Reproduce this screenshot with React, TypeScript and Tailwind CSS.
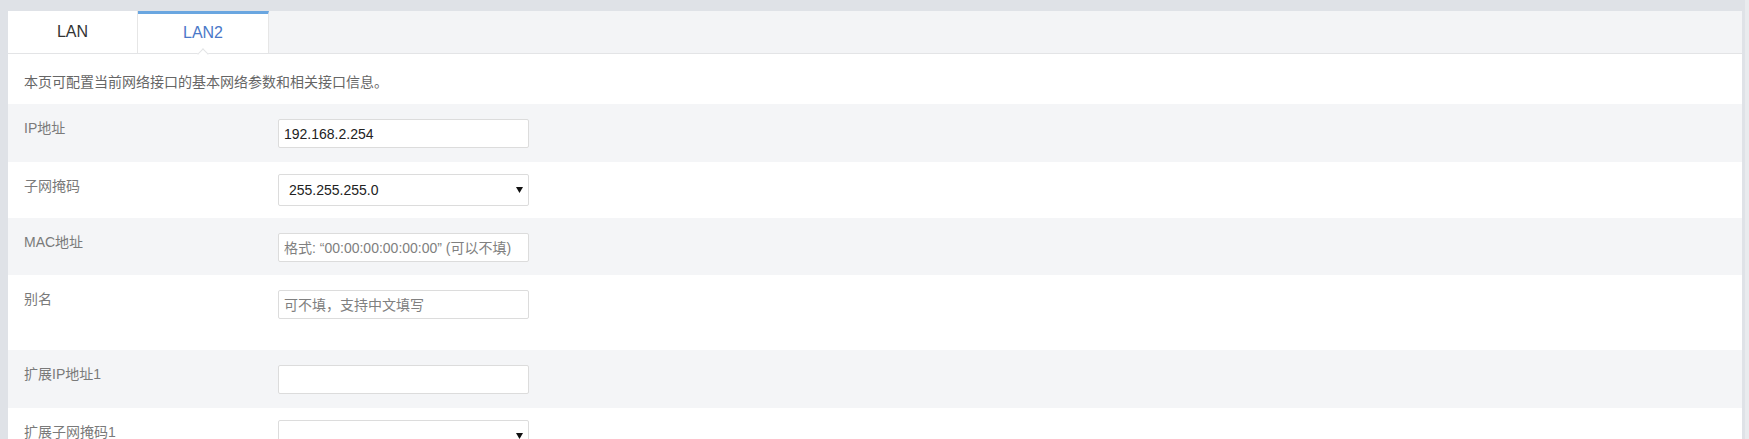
import React from 'react';

const font = "font-['Liberation_Sans','Noto_Sans_CJK_SC',sans-serif]";

type Row = {
  label: string;
  kind: 'input' | 'select';
  value?: string;
  placeholder?: string;
  height: string;
  gray: boolean;
};

const rows: Row[] = [
  { label: 'IP地址', kind: 'input', value: '192.168.2.254', height: 'h-[58px]', gray: true },
  { label: '子网掩码', kind: 'select', value: '255.255.255.0', height: 'h-[56px]', gray: false },
  { label: 'MAC地址', kind: 'input', placeholder: '格式: “00:00:00:00:00:00” (可以不填)', height: 'h-[57px]', gray: true },
  { label: '别名', kind: 'input', placeholder: '可不填，支持中文填写', height: 'h-[75px]', gray: false },
  { label: '扩展IP地址1', kind: 'input', value: '', height: 'h-[58px]', gray: true },
  { label: '扩展子网掩码1', kind: 'select', value: '', height: 'h-[58px]', gray: false },
];

function Caret() {
  return (
    <svg width="7" height="6" viewBox="0 0 7 6" className="absolute right-[5px] top-1/2 -translate-y-1/2">
      <polygon points="0,0 7,0 3.5,6" fill="#111" />
    </svg>
  );
}

function Field({ row }: { row: Row }) {
  if (row.kind === 'select') {
    return (
      <div className="pt-[12px]">
        <div className="relative w-[251px] h-[32px] bg-white border border-[#dcdcdc] rounded-[2px] flex items-center pl-[10px] text-[14px] text-[#222]">
          <span>{row.value}</span>
          <Caret />
        </div>
      </div>
    );
  }
  return (
    <div className="pt-[15px]">
      <input
        readOnly
        value={row.value ?? ''}
        placeholder={row.placeholder}
        className="w-[251px] h-[29px] bg-white border border-[#dcdcdc] rounded-[2px] px-[5px] text-[14px] text-[#222] placeholder:text-[#808080] outline-none"
      />
    </div>
  );
}

export default function App() {
  return (
    <div className={`${font} w-[1749px] h-[439px] overflow-hidden bg-[#dfe2e7] flex items-start`}>
      <div className="ml-[8px] mt-[11px] w-[1734px] bg-white flex flex-col">
        {/* tabs */}
        <div className="h-[43px] shrink-0 bg-[#f3f4f6] border-b border-[#e3e4e6] flex">
          <div className="w-[130px] bg-white border-r border-[#e6e6e6] flex items-center justify-center text-[16px] text-[#333]">
            LAN
          </div>
          <div className="relative w-[131px] bg-white border-r border-[#e6e6e6] border-t-[3px] border-t-[#6aa6e0] flex items-center justify-center text-[16px] text-[#4a78c8]">
            <span className="-mt-[2px]">LAN2</span>
            <span className="absolute left-1/2 -bottom-[5px] w-[8px] h-[8px] -translate-x-1/2 rotate-45 bg-white border-t border-l border-[#e3e4e6]" />
          </div>
        </div>

        <div className="h-[50px] shrink-0 pl-[16px] pt-[18px] text-[14px] leading-[20px] text-[#666]">
          本页可配置当前网络接口的基本网络参数和相关接口信息。
        </div>

        {rows.map((row, i) => (
          <div key={i} className={`${row.height} flex shrink-0 ${row.gray ? 'bg-[#f4f5f7]' : 'bg-white'}`}>
            <div className="w-[270px] pl-[16px] pt-[16px] text-[14px] leading-[16px] text-[#7a7a7a]">
              {row.label}
            </div>
            <Field row={row} />
          </div>
        ))}
      </div>
      <div className="ml-[3px] w-[4px] h-full bg-[#e9ebee]" />
    </div>
  );
}
